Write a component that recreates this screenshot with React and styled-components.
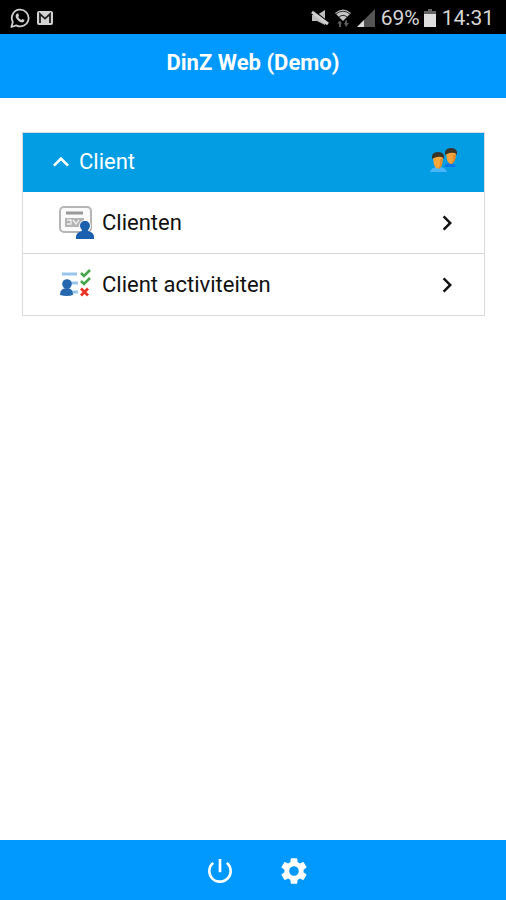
import { useState } from 'react';
import styled, { createGlobalStyle } from 'styled-components';
import {
  MdChevronRight,
  MdExpandLess,
  MdPowerSettingsNew,
  MdSettings,
} from 'react-icons/md';

const GlobalStyle = createGlobalStyle`
  * {
    box-sizing: border-box;
  }

  body {
    margin: 0;
    background: #fff;
    color: #111;
    font-family: Roboto, 'Liberation Sans', sans-serif;
    font-size: 22px;
  }
`;

function WhatsappIcon() {
  return (
    <svg width='20' height='20' viewBox='0 0 20 20' aria-hidden='true'>
      <path
        d='M1.4 19 2.8 14A8.4 8.4 0 1 1 6.2 17.4Z'
        fill='none'
        stroke='#cfcfcf'
        strokeWidth='1.8'
        strokeLinejoin='round'
      />
      <path
        d='M7 5.4 8.3 5.6 9 7.7 8.2 8.9Q9.2 10.9 11.2 11.9L12.4 11 14.5 12Q14.6 14.3 12.1 14.6C9 14.4 5.6 10.5 5.6 7.8Q5.8 6 7 5.4Z'
        fill='#cfcfcf'
      />
    </svg>
  );
}

function MailIcon() {
  return (
    <svg width='18' height='16' viewBox='0 0 18 16' aria-hidden='true'>
      <rect x='1' y='1' width='16' height='14' rx='2' fill='#d2d2d2' />
      <path
        d='M4 13V4L9 8.6 14 4V13'
        fill='none'
        stroke='#1c1c1c'
        strokeWidth='1.8'
      />
    </svg>
  );
}

function MuteIcon() {
  return (
    <svg width='18' height='18' viewBox='0 0 18 18' aria-hidden='true'>
      <path d='M1 6H6L14 1V16L6 12H1Z' fill='#bdbdbd' />
      <path d='M2 1 17 13' stroke='#000' strokeWidth='1.4' />
      <path d='M1 3 17 15' stroke='#d0d0d0' strokeWidth='3' />
    </svg>
  );
}

function WifiIcon() {
  return (
    <svg width='16' height='18' viewBox='0 0 16 18' aria-hidden='true'>
      <path d='M0 4Q8-3 16 4L8 12Z' fill='#c4c4c4' />
      <path
        d='M1 5Q8-.6 15 5M4 8Q8 4.6 12 8'
        fill='none'
        stroke='#2b2b2b'
        strokeWidth='1'
      />
      <path d='M2 14.5 5 11.5 7 14.5H6V18H4V14.5ZM9 14H10V11.5H12V14H14L11 18Z' fill='#5c5c5c' />
    </svg>
  );
}

function SignalIcon() {
  return (
    <svg width='18' height='18' viewBox='0 0 18 18' aria-hidden='true'>
      <path d='M0 18 18 0V18Z' fill='#555' />
      <path d='M0 18 7 11V18Z' fill='#dcdcdc' />
    </svg>
  );
}

function BatteryIcon() {
  return (
    <svg width='12' height='18' viewBox='0 0 12 18' aria-hidden='true'>
      <path d='M4 0H8V2H12V6H0V2H4Z' fill='#626262' />
      <rect y='5' width='12' height='13' fill='#dedede' />
    </svg>
  );
}

function PeopleIcon() {
  return (
    <svg width='30' height='28' viewBox='0 0 30 28' aria-hidden='true'>
      <path d='M14 19Q16 15 20 15 25 15 26 19Z' fill='#0878e8' />
      <path d='M0 24Q1 20 6 19H11Q16 20 17 24Z' fill='#49b4fa' />
      <path d='M16 5Q17 1 21 1 26 1 26 5L25 12Q21 20 17 12Z' fill='#f3a33b' />
      <path d='M23 7H26L25 12Q23 16 21 16 24 12 23 7Z' fill='#e18b2c' />
      <path d='M15 6Q14-1 21-1 28-1 27 6L25 4Q20 3 17 5Z' fill='#3b3429' transform='translate(0 1)' />
      <path d='M3 10Q4 5 8 5 13 5 13 10L12 17Q8 24 4 17Z' fill='#f8a839' />
      <path d='M10 11H13L12 17Q10 21 8 21 11 17 10 11Z' fill='#e18b2c' />
      <path d='M2 11Q1 4 8 4 15 4 14 11L12 9Q8 8 4 10Z' fill='#3b3429' />
    </svg>
  );
}

function ClientCardIcon() {
  return (
    <svg width='36' height='36' viewBox='0 0 36 36' aria-hidden='true'>
      <rect x='1' y='2' width='31' height='25' rx='4' fill='#fafafa' stroke='#b5b5b5' strokeWidth='2' />
      <path d='M7 8H24' stroke='#999' strokeWidth='3' />
      <path d='M6 13H25V22H6Z' fill='#b4b4b4' />
      <path d='M8 15H12V19H8M14 15 17 19 20 15' fill='none' stroke='#eee' strokeWidth='1.3' />
      <circle cx='26' cy='21' r='6' fill='#fafafa' />
      <path
        d='M26 16C29 16 31 18 31 21 31 23 29 24 29 26Q34 27 35 31V34H17V31Q18 27 23 26C23 24 21 23 21 21 21 18 23 16 26 16Z'
        fill='#1b60ae'
      />
    </svg>
  );
}

function ActivitiesIcon() {
  return (
    <svg width='36' height='36' viewBox='0 0 36 36' aria-hidden='true'>
      <path d='M3 7H18M12 16H19M13 25H19' stroke='#98c5eb' strokeWidth='3' />
      <circle cx='8' cy='17' r='4.8' fill='#2668ad' />
      <path d='M1 28Q1 21 8 21 14 21 14 28Q8 30 1 28Z' fill='#2668ad' />
      <path d='M22 6 25 9 31 3M22 14 25 17 31 11' fill='none' stroke='#44a64b' strokeWidth='2.6' />
      <path d='M22 21.5 29 28.5M29 21.5 22 28.5' stroke='#e73423' strokeWidth='2.8' />
    </svg>
  );
}

const items = [
  { label: 'Clienten', Icon: ClientCardIcon },
  { label: 'Client activiteiten', Icon: ActivitiesIcon },
];

function App() {
  const [open, setOpen] = useState(true);

  return (
    <Page>
      <GlobalStyle />
      <StatusBar>
        <StatusGroup $gap={6}>
          <WhatsappIcon />
          <MailIcon />
        </StatusGroup>
        <StatusGroup $gap={6}>
          <StatusGroup $gap={6}>
            <MuteIcon />
            <WifiIcon />
            <SignalIcon />
          </StatusGroup>
          <StatusGroup $gap={4}>
            <StatusText>69%</StatusText>
            <BatteryIcon />
          </StatusGroup>
          <StatusText>14:31</StatusText>
        </StatusGroup>
      </StatusBar>
      <Header>
        <Title>DinZ Web (Demo)</Title>
      </Header>
      <Main>
        <Panel>
          <PanelToggle
            type='button'
            aria-expanded={open}
            onClick={() => setOpen(!open)}
          >
            <Chevron $open={open} size={32} />
            <PanelTitle>Client</PanelTitle>
            <PeopleIcon />
          </PanelToggle>
          {open && (
            <List>
              {items.map(({ label, Icon }) => (
                <Item key={label}>
                  <ItemLink href='#'>
                    <Icon />
                    <ItemLabel>{label}</ItemLabel>
                    <MdChevronRight size={30} />
                  </ItemLink>
                </Item>
              ))}
            </List>
          )}
        </Panel>
      </Main>
      <Footer>
        <FooterButton type='button' aria-label='Afmelden'>
          <MdPowerSettingsNew size={32} />
        </FooterButton>
        <FooterButton type='button' aria-label='Instellingen'>
          <MdSettings size={32} />
        </FooterButton>
      </Footer>
    </Page>
  );
}

export default App;

const Page = styled.div`
  display: flex;
  flex-direction: column;
  min-height: 100vh;

  svg {
    display: block;
    flex-shrink: 0;
  }
`;

const StatusBar = styled.div`
  display: flex;
  align-items: center;
  justify-content: space-between;
  height: 34px;
  padding: 2px 12px 0 10px;
  background: #000;
`;

const StatusGroup = styled.div`
  display: flex;
  align-items: center;
  gap: ${({ $gap }) => $gap}px;
`;

const StatusText = styled.span`
  color: #d6d6d6;
  font-size: 21px;
  line-height: 24px;
`;

const Header = styled.header`
  height: 64px;
  padding-top: 16px;
  background: #0299ff;
  color: #fff;
  text-align: center;
`;

const Title = styled.h1`
  margin: 0;
  font-size: 22px;
  line-height: 26px;
  font-weight: 700;
`;

const Main = styled.main`
  flex: 1;
  padding: 34px 21px 34px 22px;
`;

const Panel = styled.section`
  border: 1px solid #d8dcdf;
`;

const PanelToggle = styled.button`
  display: flex;
  align-items: center;
  width: 100%;
  height: 59px;
  padding: 0 24px 2px 22px;
  border: 0;
  background: #029de2;
  color: #fff;
  font: inherit;
  text-align: left;
  cursor: pointer;
`;

const Chevron = styled(MdExpandLess)`
  transform: ${({ $open }) => ($open ? 'none' : 'rotate(180deg)')};
`;

const PanelTitle = styled.span`
  flex: 1;
  padding-left: 2px;
`;

const List = styled.ul`
  margin: 0;
  padding: 0;
  list-style: none;
`;

const Item = styled.li`
  & + & {
    border-top: 1px solid #d8d8d8;
  }
`;

const ItemLink = styled.a`
  display: flex;
  align-items: center;
  height: 61px;
  padding: 0 22px 0 36px;
  color: inherit;
  text-decoration: none;
`;

const ItemLabel = styled.span`
  flex: 1;
  padding-left: 7px;
`;

const Footer = styled.footer`
  display: flex;
  align-items: center;
  justify-content: center;
  gap: 42px;
  height: 60px;
  padding: 2px 0 0 8px;
  background: #0299ff;
`;

const FooterButton = styled.button`
  padding: 0;
  border: 0;
  background: none;
  color: #fff;
  cursor: pointer;
`;
